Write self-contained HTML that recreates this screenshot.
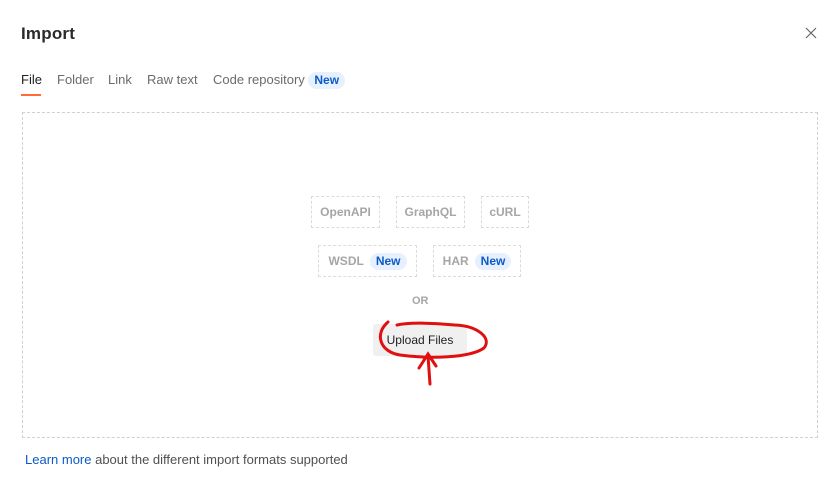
<!DOCTYPE html>
<html><head><style>
body{margin:0;width:839px;height:486px;background:#fff;font-family:"Liberation Sans",sans-serif;position:relative;overflow:hidden}
.a{position:absolute}
.tab{position:absolute;top:72px;font-size:13px;color:#6b6b6b}
.new{display:inline-block;background:#e6f0ff;color:#0b5bc8;font-weight:bold;font-size:12px;padding:1px 6px;border-radius:9px;line-height:15px}
.box{position:absolute;border:1px dashed #dcdcdc;color:#a6a6a6;font-weight:bold;font-size:12px;display:flex;align-items:center;justify-content:center;gap:6px;box-sizing:border-box}
</style></head><body>
<div class="a" style="left:21px;top:24px;font-size:17px;font-weight:bold;color:#2a2a2a;letter-spacing:0.2px">Import</div>
<svg class="a" style="left:804px;top:26px" width="14" height="14"><path d="M2 2L12 12M12 2L2 12" stroke="#666" stroke-width="1.2"/></svg>
<div class="tab" style="left:21px;color:#212121">File</div>
<div class="a" style="left:21px;top:94px;width:20px;height:2px;background:#ff6c37"></div>
<div class="tab" style="left:57px">Folder</div>
<div class="tab" style="left:108px">Link</div>
<div class="tab" style="left:147px">Raw text</div>
<div class="tab" style="left:213px;top:72px">Code repository <span class="new">New</span></div>
<div class="a" style="left:22px;top:112px;width:794px;height:324px;border:1px dashed #d0d0d0"></div>
<div class="box" style="left:311px;top:196px;width:69px;height:32px">OpenAPI</div>
<div class="box" style="left:396px;top:196px;width:69px;height:32px">GraphQL</div>
<div class="box" style="left:481px;top:196px;width:48px;height:32px">cURL</div>
<div class="box" style="left:318px;top:245px;width:99px;height:32px">WSDL <span class="new">New</span></div>
<div class="box" style="left:433px;top:245px;width:88px;height:32px">HAR <span class="new">New</span></div>
<div class="a" style="left:412px;top:295px;font-size:11px;font-weight:bold;color:#a6a6a6">OR</div>
<div class="a" style="left:373px;top:324px;width:94px;height:32px;background:#f0f0f0;border-radius:3px;font-size:12px;color:#212121;line-height:32px;text-align:center">Upload Files</div>
<svg class="a" style="left:0;top:0" width="839" height="486"><path d="M388 322C374 334 380 352 400 355C430 359 470 358 484 348C492 338 478 326 455 325C430 323 410 322 397 325" fill="none" stroke="#e01010" stroke-width="3" stroke-linecap="round"/><path d="M430 384L428 356M419 368L428 354L436 366" fill="none" stroke="#e01010" stroke-width="3" stroke-linecap="round"/></svg>
<div class="a" style="left:25px;top:452px;font-size:13px;color:#505050"><span style="color:#0b5bc8">Learn more</span> about the different import formats supported</div>
</body></html>
